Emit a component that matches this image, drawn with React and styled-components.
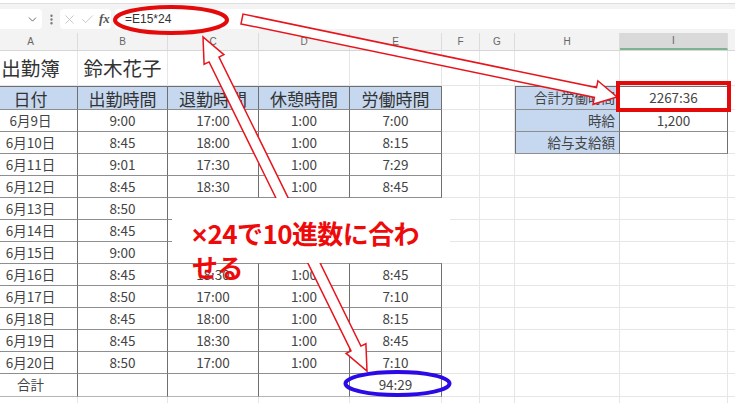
import React from 'react'
import styled, { createGlobalStyle } from 'styled-components'
import { ChevronDown, EllipsisVertical, X, Check } from 'lucide-react'

const COLS = '94px 90px 91px 91px 92px 38px 35px 105px 108px 60px'
const LETTERS = ['A', 'B', 'C', 'D', 'E', 'F', 'G', 'H', 'I', '']

// rows 6/13-6/15 lie under the note, so only A and B show there
const days = [
    ['6月9日', '9:00', '17:00', '1:00', '7:00'],
    ['6月10日', '8:45', '18:00', '1:00', '8:15'],
    ['6月11日', '9:01', '17:30', '1:00', '7:29'],
    ['6月12日', '8:45', '18:30', '1:00', '8:45'],
    ['6月13日', '8:50', '', '', ''],
    ['6月14日', '8:45', '', '', ''],
    ['6月15日', '9:00', '', '', ''],
    ['6月16日', '8:45', '18:30', '1:00', '8:45'],
    ['6月17日', '8:50', '17:00', '1:00', '7:10'],
    ['6月18日', '8:45', '18:00', '1:00', '8:15'],
    ['6月19日', '8:45', '18:30', '1:00', '8:45'],
    ['6月20日', '8:50', '17:00', '1:00', '7:10'],
]

const side = [
    ['合計労働時間', '2267:36'],
    ['時給', '1,200'],
    ['給与支給額', ''],
]

// hollow arrow outline, optionally with a head at both ends
function arrowPoints(x1, y1, x2, y2, w, hw, hl, both) {
    const dx = x2 - x1
    const dy = y2 - y1
    const L = Math.hypot(dx, dy)
    const ux = dx / L
    const uy = dy / L
    const nx = -uy
    const ny = ux
    const p = (t, s) => [x1 + ux * t + nx * s, y1 + uy * t + ny * s]
    const pts = []
    if (both) pts.push(p(0, 0), p(hl, hw), p(hl, w))
    else pts.push(p(0, w))
    pts.push(p(L - hl, w), p(L - hl, hw), p(L, 0), p(L - hl, -hw), p(L - hl, -w))
    if (both) pts.push(p(hl, -w), p(hl, -hw))
    else pts.push(p(0, -w))
    return pts.map((q) => q.map((v) => v.toFixed(1)).join(',')).join(' ')
}

function App() {
    return (
        <>
            <Global />
            <Frame>
                <FormulaBar>
                    <NameBox>
                        <ChevronDown size={13} strokeWidth={1.6} />
                    </NameBox>
                    <Dots>
                        <EllipsisVertical size={13} strokeWidth={2.4} />
                    </Dots>
                    <FxBox>
                        <X size={15} strokeWidth={1.2} />
                        <Check size={15} strokeWidth={1.2} />
                        <Fx>fx</Fx>
                    </FxBox>
                    <FormulaInput>=E15*24</FormulaInput>
                </FormulaBar>

                <HeaderRow>
                    {LETTERS.map((l, i) => (
                        <ColHead key={i} $active={l === 'I'}>{l}</ColHead>
                    ))}
                </HeaderRow>

                <Sheet>
                    <Row $h={35}>
                        <Cell $title>出勤簿</Cell>
                        <Cell $title>鈴木花子</Cell>
                        {Array.from({ length: 8 }).map((_, i) => <Cell key={i} />)}
                    </Row>

                    <Row $h={24}>
                        {['日付', '出勤時間', '退勤時間', '休憩時間', '労働時間'].map((h) => (
                            <Cell key={h} $head $fill $frame $top>{h}</Cell>
                        ))}
                        <Cell />
                        <Cell />
                        <Cell $fill $frame $top $left $align="right">{side[0][0]}</Cell>
                        <Cell $frame $top>{side[0][1]}</Cell>
                        <Cell />
                    </Row>

                    {days.map((d, r) => (
                        <Row key={d[0]} $h={22}>
                            {d.map((v, c) => (
                                <Cell key={c} $frame>{v}</Cell>
                            ))}
                            <Cell />
                            <Cell />
                            {r < 2 ? (
                                <>
                                    <Cell $fill $frame $left $align="right">{side[r + 1][0]}</Cell>
                                    <Cell $frame>{side[r + 1][1]}</Cell>
                                </>
                            ) : (
                                <>
                                    <Cell />
                                    <Cell />
                                </>
                            )}
                            <Cell />
                        </Row>
                    ))}

                    <Row $h={23}>
                        <Cell $frame $soft>合計</Cell>
                        <Cell $frame $soft />
                        <Cell $frame $soft />
                        <Cell $frame $soft />
                        <Cell $frame $soft>94:29</Cell>
                        {Array.from({ length: 5 }).map((_, i) => <Cell key={i} />)}
                    </Row>

                    <Row $h={22}>
                        {Array.from({ length: 10 }).map((_, i) => <Cell key={i} />)}
                    </Row>
                </Sheet>

                <Marks viewBox="0 0 735 403" width="735" height="403">
                    <polygon
                        points={arrowPoints(242, 19, 617, 97, 5, 12, 22, false)}
                        fill="#fff"
                        stroke="#e8141c"
                        strokeWidth="1.5"
                    />
                    <polygon
                        points={arrowPoints(203, 37, 367, 371, 5.5, 11, 25, true)}
                        fill="#fff"
                        stroke="#e8141c"
                        strokeWidth="1.5"
                    />
                    <ellipse cx="171" cy="20" rx="56" ry="13" fill="none" stroke="#e50a0a" strokeWidth="4" />
                    <rect x="618" y="83" width="111" height="27" fill="none" stroke="#e50a0a" strokeWidth="4" />
                    <ellipse cx="397.5" cy="383.5" rx="52" ry="11.5" fill="none" stroke="#2a0ae6" strokeWidth="4" />
                </Marks>

                <Note>
                    <Times>×</Times>24で10進数に合わ<br />せる
                </Note>
            </Frame>
        </>
    )
}

const Global = createGlobalStyle`
    html, body {
        margin: 0;
        padding: 0;
        background: #fff;
        overflow: hidden;
    }
    body {
        font-family: "Noto Sans CJK JP", "Noto Sans", sans-serif;
        color: #3a3a3a;
    }
`

const Frame = styled.div`
    position: relative;
    width: 735px;
    height: 403px;
    overflow: hidden;
    background: #fff;
`

const FormulaBar = styled.div`
    box-sizing: border-box;
    display: flex;
    align-items: flex-start;
    height: 30px;
    margin-top: 3px;
    padding-top: 5px;
    border-top: 1px solid #dedede;
    background: #f3f3f3;
`

const NameBox = styled.div`
    display: flex;
    align-items: center;
    justify-content: flex-end;
    width: 42px;
    height: 20px;
    padding-right: 3px;
    box-sizing: border-box;
    background: #fff;
    border-radius: 0 4px 4px 0;
    color: #555;
`

const Dots = styled.div`
    display: flex;
    align-items: center;
    justify-content: center;
    width: 18px;
    height: 20px;
    color: #777;
`

const FxBox = styled.div`
    display: flex;
    align-items: center;
    gap: 3px;
    width: 51px;
    height: 20px;
    padding-left: 2px;
    box-sizing: border-box;
    background: #fff;
    border-radius: 4px;
    color: #b8b8b8;
`

const Fx = styled.span`
    margin-left: 1px;
    font-family: "Liberation Serif", serif;
    font-style: italic;
    font-weight: 700;
    font-size: 13px;
    color: #555;
`

const FormulaInput = styled.div`
    flex: 1;
    height: 20px;
    margin-left: 4px;
    padding-left: 10px;
    background: #fff;
    border-radius: 4px 0 0 4px;
    font-family: "Liberation Sans", sans-serif;
    font-size: 12px;
    line-height: 20px;
    color: #333;
`

const HeaderRow = styled.div`
    display: grid;
    grid-template-columns: ${COLS};
    height: 17px;
    margin-left: -16px;
    background: #f3f3f3;
    border-bottom: 1px solid #d6d6d6;
`

const ColHead = styled.div`
    display: flex;
    align-items: center;
    justify-content: center;
    box-sizing: border-box;
    border-right: 1px solid #dcdcdc;
    font-family: "Liberation Sans", sans-serif;
    font-size: 10px;
    color: #666;
    background: ${(p) => (p.$active ? '#d9d9d9' : 'transparent')};
    border-bottom: ${(p) => (p.$active ? '2px solid #7fb28f' : 'none')};
`

const Sheet = styled.div`
    display: flex;
    flex-direction: column;
    margin-left: -16px;
`

const Row = styled.div`
    display: grid;
    grid-template-columns: ${COLS};
    height: ${(p) => p.$h}px;
`

const Cell = styled.div`
    display: flex;
    align-items: center;
    justify-content: ${(p) => (p.$align === 'right' ? 'flex-end' : 'center')};
    box-sizing: border-box;
    min-width: 0;
    padding: 0 4px;
    white-space: nowrap;
    line-height: 1;
    font-size: ${(p) => (p.$title ? '19.5px' : p.$head ? '17px' : '13.5px')};
    color: ${(p) => (p.$title || p.$head ? '#333' : '#444')};
    background: ${(p) => (p.$fill ? '#c5d8f0' : 'transparent')};
    border-right: 1px solid ${(p) => (p.$frame ? '#6f6f6f' : '#e6e6e6')};
    border-bottom: 1px solid ${(p) => (p.$soft ? '#b5b5b5' : p.$frame ? '#8e8e8e' : '#e6e6e6')};
    border-top: ${(p) => (p.$top ? '1px solid #6f6f6f' : 'none')};
    border-left: ${(p) => (p.$left ? '1px solid #6f6f6f' : 'none')};
`

const Marks = styled.svg`
    position: absolute;
    left: 0;
    top: 0;
    pointer-events: none;
`

const Note = styled.div`
    position: absolute;
    left: 172px;
    top: 198px;
    width: 278px;
    height: 65px;
    box-sizing: border-box;
    padding: 19px 0 0 20px;
    background: #fff;
    font-family: "Noto Sans CJK JP", sans-serif;
    font-weight: 700;
    font-size: 26px;
    line-height: 32px;
    letter-spacing: -0.6px;
    color: #ee0a0a;
    white-space: nowrap;
`

const Times = styled.span`
    font-family: "Liberation Sans", sans-serif;
    font-weight: 700;
    margin-right: 1px;
`

export default App
